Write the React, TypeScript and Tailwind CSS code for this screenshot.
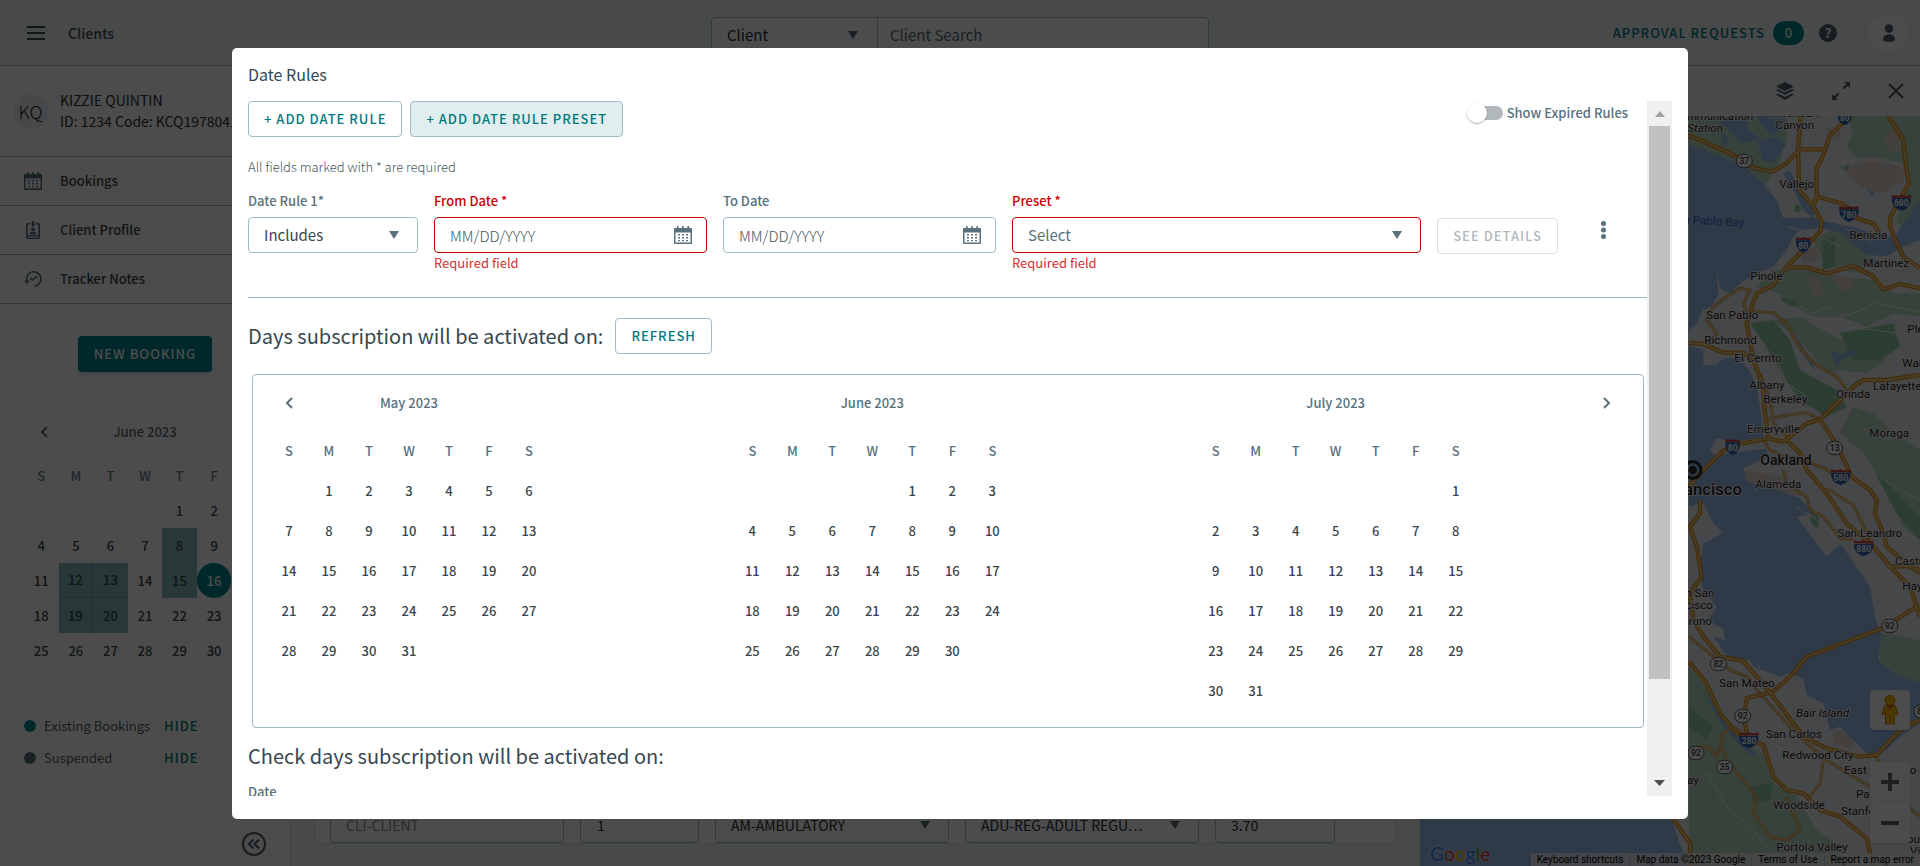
import type { ReactNode } from "react";

const WEEKDAYS = ["S", "M", "T", "W", "T", "F", "S"];

function buildWeeks(offset: number, days: number): (number | null)[][] {
  const cells: (number | null)[] = [
    ...Array.from({ length: offset }, () => null),
    ...Array.from({ length: days }, (_, i) => i + 1),
  ];
  const weeks: (number | null)[][] = [];
  for (let i = 0; i < cells.length; i += 7) weeks.push(cells.slice(i, i + 7));
  return weeks;
}

/* ---------- icons ---------- */

function CalendarIcon() {
  return (
    <svg width="18" height="18" viewBox="0 0 18 18" fill="currentColor" aria-hidden="true">
      <path d="M0 3a1 1 0 0 1 1-1h2V0h1.500v2h3.700V0h1.600v2h3.700V0H15v2h2a1 1 0 0 1 1 1v3H0z" />
      <path fillRule="evenodd" d="M0 5h18v12a1 1 0 0 1-1 1H1a1 1 0 0 1-1-1zm1.500 1.500v10h15v-10z" />
      <path d="M4 8h2v1.500H4zm4 0h2v1.500H8zm4 0h2v1.500h-2zM4 11h2v1.500H4zm4 0h2v1.500H8zm4 0h2v1.500h-2zM4 14h2v1.300H4zm4 0h2v1.300H8zm4 0h2v1.300h-2z" />
    </svg>
  );
}

function ProfileIcon() {
  return (
    <svg width="18" height="18" viewBox="0 0 18 18" fill="currentColor" aria-hidden="true">
      <path fillRule="evenodd" d="M2 3.500A1.500 1.500 0 0 1 3.500 2H6v1.500H3.700V14h10.600V3.500H12V2h2.500A1.500 1.500 0 0 1 16 3.500v13a1.500 1.500 0 0 1-1.500 1.500h-11A1.500 1.500 0 0 1 2 16.500zM3.700 15.500v1h10.600v-1z" />
      <path d="M7.500 1.500a1.500 1.500 0 0 1 3 0V4a1.500 1.500 0 0 1-3 0z" />
      <circle cx="9" cy="8.300" r="1.900" />
      <path d="M5.700 13.200c0-1.800 1.400-2.500 3.300-2.500s3.300.7 3.300 2.500z" />
    </svg>
  );
}

function TrackerIcon() {
  return (
    <svg width="18" height="18" viewBox="0 0 18 18" fill="none" stroke="currentColor" strokeWidth="1.600" aria-hidden="true">
      <path d="M2.600 11.500V9.500A7.200 7.200 0 1 1 10 16.200" />
      <path d="M6 7.800l2.400 2.200 5-4" />
      <path d="M0 10.800l5.600-.6-2.400 4z" fill="currentColor" stroke="none" />
    </svg>
  );
}

function Caret() {
  return (
    <svg width="10" height="8" viewBox="0 0 10 8" className="pointer-events-none shrink-0 text-[#58717d]" fill="currentColor" aria-hidden="true">
      <path d="M0 0h10L5 8z" />
    </svg>
  );
}

function Chevron({ right = false }: { right?: boolean }) {
  return (
    <svg width="8" height="12" viewBox="0 0 8 12" fill="none" stroke="currentColor" strokeWidth="2" aria-hidden="true">
      <path d={right ? "M1 1l5 5-5 5" : "M7 1L2 6l5 5"} />
    </svg>
  );
}

/* ---------- page behind the dialog ---------- */

function TopBar() {
  return (
    <header className="flex h-[66px] shrink-0 items-center border-t border-b border-t-[#ffffff] border-b-[#9fbcc6] bg-[#f0f3f6]">
      <div className="flex flex-1 items-center">
        <button type="button" aria-label="Open menu" className="ml-[27px] text-[#3d4f59]">
          <svg width="18" height="14" viewBox="0 0 18 14" fill="currentColor" aria-hidden="true">
            <path d="M0 0h18v2H0zM0 6h18v2H0zM0 12h18v2H0z" />
          </svg>
        </button>
        <span className="pl-[23px] text-[14px] leading-5 font-medium text-[#3d4f59]">Clients</span>
      </div>
      <form className="mt-1 flex h-9 w-[498px] rounded border border-[#9fbcc6] bg-white text-[15px]">
        <div className="flex w-[166px] items-center border-r border-[#9fbcc6] pr-[19px]">
          <select aria-label="Search type" className="h-full flex-1 appearance-none bg-transparent pl-[15px] text-[#263238]">
            <option>Client</option>
          </select>
          <Caret />
        </div>
        <input aria-label="Client search" placeholder="Client Search" className="min-w-0 flex-1 bg-transparent px-3 placeholder:text-[#58717d]" />
      </form>
      <div className="flex flex-1 items-center justify-end">
        <a href="#approvals" className="text-[13px] leading-5 font-medium tracking-[1px] text-[#007a80]">APPROVAL REQUESTS</a>
        <span className="ml-2 flex h-6 w-[31px] items-center justify-center rounded-full bg-[#00858c] text-[13px] font-medium text-white">0</span>
        <button type="button" aria-label="Help" className="ml-[15px] flex h-[18px] w-[18px] items-center justify-center rounded-full bg-[#4b5f69] text-[13px] font-bold text-white">?</button>
        <button type="button" aria-label="Account" className="mr-3 ml-8 flex h-[39px] w-[39px] items-center justify-center rounded-full bg-white text-[#4b5f69]">
          <svg width="14" height="18" viewBox="0 0 14 18" fill="currentColor" aria-hidden="true">
            <circle cx="7" cy="4.500" r="4.200" />
            <path d="M1 15.500C1 12 3.500 10.500 7 10.500s6 1.500 6 5c0 1.700-2.500 2.500-6 2.500s-6-.8-6-2.500z" />
          </svg>
        </button>
      </div>
    </header>
  );
}

function NavItem({ icon, label }: { icon: ReactNode; label: string }) {
  return (
    <a href="#nav" className="flex h-[49px] items-center border-b border-[#9fbcc6] pl-6 text-[13px] font-medium text-[#37474f]">
      <span className="w-9 text-[#58717d]">{icon}</span>
      {label}
    </a>
  );
}

const BOOKED = [8, 12, 13, 15, 19, 20];

function bookedClass(day: number | null) {
  if (day === null || !BOOKED.includes(day)) return "";
  const right = day === 12 || day === 19 ? " border-r border-r-[#5fa3a8]" : "";
  const bottom = day === 12 || day === 13 ? " border-b border-b-[#5fa3a8]" : "";
  return "bg-[#86b9bd]" + right + bottom;
}

function LegendRow({ dot, label }: { dot: string; label: string }) {
  return (
    <div className="flex h-8 items-center">
      <span className={"h-3 w-3 rounded-full " + dot} />
      <span className="w-[128px] pl-2 text-[13px] text-[#4b5f69]">{label}</span>
      <button type="button" className="text-[13px] font-medium tracking-[1px] text-[#007a80]">HIDE</button>
    </div>
  );
}

function Sidebar() {
  return (
    <aside className="flex w-[291px] shrink-0 flex-col border-r border-[#d5dde2] bg-white">
      <div className="flex h-[91px] items-center border-b border-[#9fbcc6] pl-[13px]">
        <span className="flex h-[35px] w-[35px] items-center justify-center rounded-full bg-[#ecf0f4] text-[18px] font-light text-[#101a1e]">KQ</span>
        <div className="pl-3 text-[14px] leading-[21px] whitespace-nowrap text-[#263238]">
          <p>KIZZIE QUINTIN</p>
          <p>ID: 1234 Code: KCQ19780415</p>
        </div>
      </div>
      <nav>
        <NavItem icon={<CalendarIcon />} label="Bookings" />
        <NavItem icon={<ProfileIcon />} label="Client Profile" />
        <NavItem icon={<TrackerIcon />} label="Tracker Notes" />
      </nav>
      <button type="button" className="mt-8 h-9 self-center rounded bg-[#00858c] px-4 text-[13px] font-medium tracking-[1px] text-white shadow-md">NEW BOOKING</button>
      <div className="mt-10 flex h-10 items-center px-6 text-[#58717d]">
        <button type="button" aria-label="Previous month" className="w-9 pl-4"><Chevron /></button>
        <h2 className="flex-1 text-center text-[13px] font-medium">June 2023</h2>
        <span className="w-9" />
      </div>
      <div className="mt-[6px] px-6">
        <table className="w-full table-fixed border-separate border-spacing-0 text-center text-[13px] font-medium text-[#37474f]">
          <thead>
            <tr>
              {WEEKDAYS.map((d, i) => (
                <th key={i} className="h-[35px] p-0 font-medium text-[#6b808a]">{d}</th>
              ))}
            </tr>
          </thead>
          <tbody>
            {buildWeeks(4, 30).map((week, w) => (
              <tr key={w}>
                {week.map((day, i) => (
                  <td key={i} className={"h-[35px] p-0 " + bookedClass(day)}>
                    {day === 16 ? (
                      <span className="flex h-[35px] w-full items-center justify-center rounded-full bg-[#00858c] text-white">16</span>
                    ) : (
                      day
                    )}
                  </td>
                ))}
              </tr>
            ))}
          </tbody>
        </table>
      </div>
      <div className="mt-[42px] pl-6">
        <LegendRow dot="bg-[#00858c]" label="Existing Bookings" />
        <LegendRow dot="bg-[#58717d]" label="Suspended" />
      </div>
      <button type="button" aria-label="Collapse sidebar" className="mt-auto mr-6 mb-[10px] self-end text-[#4b5f69]">
        <svg width="24" height="24" viewBox="0 0 24 24" fill="none" stroke="currentColor" strokeWidth="2" aria-hidden="true">
          <circle cx="12" cy="12" r="11" />
          <path d="M11.500 7.500L7 12l4.500 4.500M17 7.500L12.500 12l4.500 4.500" />
        </svg>
      </button>
    </aside>
  );
}

function TripForm() {
  const box = "flex h-9 items-center rounded border border-[#9fbcc6] bg-white";
  return (
    <main className="flex min-w-0 flex-1 flex-col justify-end bg-[#f0f3f6] pr-6 pb-[22px] pl-[23px]">
      <section className="flex gap-4 rounded border border-[#dbe3e8] bg-white pl-[15px] text-[14px] text-[#263238]">
        <input aria-label="Client" disabled placeholder="CLI-CLIENT" className={box + " w-[234px] px-[15px] placeholder:text-[#8b979d]"} />
        <input aria-label="Count" defaultValue="1" className={box + " w-[119px] px-4"} />
        <div className={box + " w-[234px] pr-[18px]"}>
          <select aria-label="Space type" className="h-full min-w-0 flex-1 appearance-none bg-transparent pl-[15px]">
            <option>AM-AMBULATORY</option>
          </select>
          <Caret />
        </div>
        <div className={box + " w-[234px] pr-[18px]"}>
          <select aria-label="Fare type" className="h-full min-w-0 flex-1 appearance-none bg-transparent pl-[15px]">
            <option>ADU-REG-ADULT REGU…</option>
          </select>
          <Caret />
        </div>
        <input aria-label="Fare" defaultValue="3.70" className={box + " w-[120px] px-[15px]"} />
      </section>
    </main>
  );
}

/* ---------- map ---------- */

const HIGHWAYS = [
  "M100 275L160 292L200 308L280 345L340 383L395 396L440 370L478 328L550 328",
  "M630 228L570 285L550 345L530 385L530 470L520 500L545 545L542 572L490 630L440 680L400 735L350 760L335 800L320 850L340 960L370 1040L375 1120L385 1195L300 1212L250 1232L180 1300L147 1340",
  "M482 228L474 330L478 450L520 500",
  "M525 468L610 492L650 535L700 550L720 580",
  "M745 228L790 300L796 360L806 430L750 535L750 560L770 610L790 650L840 685",
  "M440 682L500 682L560 700L640 678L700 710L730 748L780 732L840 745",
  "M147 908L190 912L250 938L310 938L340 960",
  "M385 1195L430 1205L500 1150L540 1138L590 1090L640 1040L670 1020L740 1020L840 1005",
  "M540 1138L590 1215L635 1310L690 1350L710 1380L705 1420L730 1480L740 1520L800 1570L840 1600",
  "M440 1200L480 1240L500 1290L560 1360L620 1450L700 1520L760 1590L810 1640L840 1730",
  "M740 1580L800 1578L840 1590",
  "M830 1700L730 1764L500 1850L460 1900L400 1955L320 1975L312 2030L320 2080",
  "M180 1380L180 1420L150 1460L170 1520L185 1610L150 1660L160 1740L190 1790L240 1850L310 1863L400 1970L490 2090L560 2125L660 2150L710 2145L780 2070L840 2040",
  "M147 1865L200 1930L240 2020L290 2080L370 2115L385 2160L400 2210L440 2250L490 2260L540 2310L600 2330L680 2395L700 2478",
  "M100 2338L150 2410L150 2478",
];

const LOCAL_ROADS = [
  "M330 840L310 790L330 750L300 745L260 770L220 800L200 840L230 880L215 900",
  "M330 812L400 818L440 850L470 910L520 970L590 1010L620 1050",
  "M147 2130L200 2120L230 2150L250 2080L280 2060L310 2080",
  "M240 2120L290 2200L350 2270L340 2320L390 2390L440 2400L480 2370L460 2320L440 2270",
  "M550 2165L540 2230L505 2275",
  "M380 1140L440 1125L500 1118L540 1138",
  "M430 1290L440 1330L500 1370L510 1410L550 1430L600 1495L640 1500",
  "M370 1200L390 1230L430 1250L480 1255L540 1280L600 1310",
  "M560 1345L640 1395L690 1500",
  "M147 1790L220 1850L270 1890L320 1910L360 1960L440 2050L500 2110L560 2160L640 2210L690 2240",
  "M690 2240L720 2170L700 2140",
  "M780 2280L840 2330",
  "M360 1000L390 1080L400 1150L450 1200",
];

const STREETS = [
  "M540 350L580 335L610 350L615 390L600 430L540 460M560 345V440M580 340V440M540 370L612 370M540 400L610 395M540 420L600 425",
  "M600 440L610 470L640 490M600 430L590 480",
  "M440 560L480 570L560 600L600 620M580 540L640 580L700 610",
  "M410 960L440 1030L500 1070M400 1000L460 1080L500 1110M390 1080L480 1100",
  "M480 800L520 820L560 800L610 830L690 800L700 785L760 800L840 815M600 820L620 860L700 870L780 880",
  "M640 1080L700 1060L760 1100L840 1110M660 1160L740 1200L800 1180M700 1040L720 1090L840 1150",
  "M470 1400L560 1460L600 1520M640 1500L690 1560L720 1640L840 1660M720 1690L840 1700",
  "M600 1280L680 1300L740 1360M660 1220L690 1290L780 1350L840 1380",
  "M350 1870L420 1990L520 2090M260 1880L360 2000L430 2100M380 2100L480 2160L540 2230",
  "M560 2200L640 2280L720 2300M480 2290L560 2380L640 2420M620 2180L690 2290",
  "M147 2240L200 2200L260 2300L330 2360L400 2440",
];

const PLACES: [string, number, number][] = [
  ["Canyon", 406, 267],
  ["Vallejo", 418, 444],
  ["Benicia", 628, 597],
  ["Martinez", 670, 681],
  ["Pinole", 331, 720],
  ["San Pablo", 198, 837],
  ["Richmond", 193, 912],
  ["El Cerrito", 283, 966],
  ["Albany", 328, 1047],
  ["Berkeley", 370, 1089],
  ["Orinda", 588, 1073],
  ["Lafayette", 699, 1050],
  ["Moraga", 688, 1191],
  ["Emeryville", 321, 1179],
  ["Pleasant Hill", 802, 879],
  ["Walnut Creek", 787, 980],
  ["Alameda", 346, 1344],
  ["San Leandro", 592, 1491],
  ["Castro Valley", 765, 1575],
  ["Hayward", 787, 1650],
  ["San Mateo", 237, 1941],
  ["San Carlos", 378, 2094],
  ["Redwood City", 427, 2157],
  ["East Palo Alto", 612, 2202],
  ["Palo Alto", 648, 2275],
  ["Stanford", 603, 2325],
  ["Woodside", 400, 2307],
  ["Portola Valley", 409, 2433],
  ["Mountain", 770, 2410],
  ["View", 810, 2445],
];

const INTERSTATES: [string, number, number][] = [
  ["80", 614, 232],
  ["680", 784, 488],
  ["780", 627, 522],
  ["80", 490, 615],
  ["80", 278, 1221],
  ["580", 602, 1312],
  ["880", 671, 1525],
  ["280", 327, 2101],
];

const ROUTES: [string, number, number][] = [
  ["37", 313, 363],
  ["13", 584, 1224],
  ["92", 749, 1758],
  ["82", 235, 1872],
  ["92", 308, 2028],
  ["92", 168, 2139],
  ["35", 254, 2181],
  ["84", 846, 2014],
];

function RegionMap() {
  return (
    <svg className="h-full w-full" viewBox="-660 228 1500 2250" preserveAspectRatio="xMaxYMin slice" role="img" aria-label="Map of the San Francisco Bay Area" fontFamily="Roboto, sans-serif">
      <rect x="-660" y="228" width="1500" height="2250" fill="#eceef2" />
      <g fill="#b4dcc3">
        <path d="M147 228H440L440 300L420 360L380 430L300 390L147 330z" />
        <path d="M620 228H840V560L800 590L770 540L800 440L790 370L700 350L650 355L620 320L640 280z" />
        <path d="M350 740L400 690L520 690L600 710L700 720L760 760L840 760V830L760 820L680 860L600 830L520 830L450 790L420 760z" />
        <path d="M520 600L600 560L650 620L700 660L660 700L600 690L550 660zM230 690L260 700L290 710L250 760z" />
        <path d="M640 1100L700 1120L760 1180L840 1230V1500L790 1460L740 1340L660 1230L600 1180z" />
        <path d="M147 1880L230 1980L260 2060L330 2120L370 2140L400 2230L470 2270L530 2370L600 2420L620 2478H160L147 2420z" />
        <path d="M720 1780L840 1800V1950L770 1910L720 1880z" />
        <path d="M400 840L480 830L600 900L660 900L740 960L680 1000L600 990L560 1000L480 900z" />
      </g>
      <g fill="#93cda5">
        <path d="M330 850L400 840L450 900L480 990L590 1050L620 1100L560 1130L480 1080L430 1010L380 920z" />
        <path d="M600 880L760 850L780 920L720 960L640 960z" />
        <path d="M700 1290L760 1350L840 1430V1500L770 1420z" />
        <path d="M330 2240L400 2230L390 2280L340 2290zM147 2000L220 2060L200 2100L147 2060z" />
        <path d="M515 1400L540 1440L530 1470L510 1440zM700 2085L745 2080L740 2130L700 2120z" />
        <path d="M548 600L585 590V680L548 690zM420 770L475 785L460 800L430 785zM600 380L630 372L620 400z" />
      </g>
      <g fill="#e2d8cf">
        <path d="M620 390L640 372L700 362L780 378L795 400L790 430L760 435L740 460L680 450L640 425z" />
        <path d="M735 280L760 268L785 300L780 340L745 330L732 310zM560 265L605 275L590 300L565 290z" />
        <path d="M500 720L530 710L550 740L545 770L525 765zM570 715L620 705L645 735L620 755L600 745zM480 640L530 620L540 660L490 670z" />
        <path d="M310 1290L420 1310L500 1370L420 1360L320 1330zM580 2070L640 2080L640 2130L580 2110z" />
      </g>
      <g fill="#9fc1f4">
        <path d="M147 315L230 345L310 378L370 430L410 480L430 535L520 532L560 545L640 560L700 582L760 592L800 540L840 480V600L785 622L740 648L680 646L650 620L600 577L540 565L480 570L460 590L440 630L400 680L350 702L310 722L270 760L240 745L230 690L235 760L215 800L190 808L170 850L147 872z" />
        <path d="M200 228H330L320 262L360 300L410 290L440 310L400 370L370 360L350 300L300 310L260 262z" />
        <path d="M350 228H420L440 250L400 290L370 262z" />
        <path d="M240 270L270 300L250 320z" />
        <path d="M430 400L450 390L480 450L530 500L520 535L490 510L460 450z" />
        <path d="M680 448L695 456L705 448L698 468L690 464z" />
        <path d="M147 915L190 930L190 975L225 975L250 955L300 955L330 995L350 1040L360 1100L372 1190L290 1205L230 1195L210 1230L230 1250L260 1240L380 1225L385 1250L310 1285L320 1325L400 1345L480 1375L520 1420L470 1430L560 1550L600 1510L650 1580L690 1640L705 1730L725 1790L715 1860L760 1900L840 1930V2050L780 2090L740 2130L690 2150L640 2100L600 2060L570 2070L550 1990L500 1965L490 1915L450 1900L420 1910L340 1880L330 1860L260 1848L220 1790L255 1800L250 1770L205 1740L230 1700L190 1650L175 1600L190 1510L250 1480L220 1450L190 1390L147 1400z" />
        <path d="M-660 2200L60 2280L100 2345L115 2400L145 2478H-660z" />
        <path d="M465 880L500 940L530 970L520 985L480 930zM570 930L600 945L640 925L650 945L610 955L590 980z" />
        <path d="M180 1940L230 2010L300 2080L350 2150L320 2140L250 2060z" />
      </g>
      <path d="M468 490L485 505L478 516L462 512z" fill="#93cda5" />
      <g fill="none" stroke="#fbfbfd" strokeWidth="3">
        {STREETS.map((d) => (
          <path key={d} d={d} />
        ))}
      </g>
      <g fill="none" strokeLinejoin="round">
        <g stroke="#e0a04a" strokeWidth="9">
          {LOCAL_ROADS.map((d) => (
            <path key={d} d={d} />
          ))}
        </g>
        <g stroke="#f0d49c" strokeWidth="4">
          {LOCAL_ROADS.map((d) => (
            <path key={d} d={d} />
          ))}
        </g>
        <g stroke="#e8920c" strokeWidth="13">
          {HIGHWAYS.map((d) => (
            <path key={d} d={d} />
          ))}
        </g>
        <g stroke="#efc988" strokeWidth="6">
          {HIGHWAYS.map((d) => (
            <path key={d} d={d} />
          ))}
        </g>
      </g>
      {ROUTES.map(([n, x, y]) => (
        <g key={n + x}>
          <rect x={x - 24} y={y - 20} width="48" height="40" rx="20" fill="#ffffff" stroke="#54595e" strokeWidth="3" />
          <text x={x} y={y + 9} fontSize="26" fontWeight="500" textAnchor="middle" fill="#3c4043">{n}</text>
        </g>
      ))}
      {INTERSTATES.map(([n, x, y]) => {
        const w = n.length > 2 ? 29 : 22;
        return (
          <g key={n + x}>
            <path d={`M${x - w} ${y - 14}H${x + w}Q${x + w + 2} ${y + 14} ${x} ${y + 24}Q${x - w - 2} ${y + 14} ${x - w} ${y - 14}z`} fill="#3468b4" />
            <path d={`M${x - w} ${y - 24}q${w / 2} 6 ${w} 0q${w / 2} 6 ${w} 0v9H${x - w}z`} fill="#d8434b" />
            <text x={x} y={y + 11} fontSize="26" fontWeight="700" textAnchor="middle" fill="#ffffff">{n}</text>
          </g>
        );
      })}
      <g fill="#1f2226" stroke="#ffffff" strokeWidth="5" paintOrder="stroke" strokeLinejoin="round" fontSize="35">
        {PLACES.map(([name, x, y]) => (
          <text key={name} x={x} y={y}>{name}</text>
        ))}
        <text x="386" y="232">American</text>
        <text x="100" y="240" fontStyle="italic">Communication</text>
        <text x="142" y="276" fontStyle="italic">Station</text>
        <text x="468" y="2031" fontStyle="italic">Bair Island</text>
        <text x="223" y="1671" textAnchor="end">South San</text>
        <text x="219" y="1707" textAnchor="end">Francisco</text>
        <text x="216" y="1755" textAnchor="end">San Bruno</text>
        <text x="176" y="2232" textAnchor="end">Half Moon Bay</text>
        <text x="361" y="1275" fontSize="42" fontWeight="500">Oakland</text>
        <text x="306" y="1364" fontSize="50" fontWeight="500" textAnchor="end">San Francisco</text>
      </g>
      <text x="90" y="548" fontSize="35" fill="#3769c8" transform="rotate(3 82 551)">San Pablo Bay</text>
      <circle cx="158" cy="1290" r="25" fill="none" stroke="#2b2f33" strokeWidth="10" />
      <circle cx="158" cy="1290" r="13" fill="#2b2f33" />
    </svg>
  );
}

function MapPanel() {
  return (
    <section className="flex w-[500px] shrink-0 flex-col bg-white">
      <div className="flex h-[50px] shrink-0 items-center justify-end gap-[38px] bg-[#f8f9fa] pr-4 text-[#4b5f69]">
        <button type="button" aria-label="Layers">
          <svg width="18" height="18" viewBox="0 0 18 18" fill="currentColor" aria-hidden="true">
            <path d="M9 0l9 4.500L9 9 0 4.500z" />
            <path d="M0 8l2-1 7 3.500L16 7l2 1-9 4.800zM0 12.500l2-1L9 15l7-3.500 2 1L9 18z" />
          </svg>
        </button>
        <button type="button" aria-label="Expand map">
          <svg width="18" height="18" viewBox="0 0 18 18" fill="currentColor" aria-hidden="true">
            <path d="M12 0h6v6l-2.200-2.200-3.600 3.600-1.600-1.600 3.600-3.600zM6 18H0v-6l2.200 2.200 3.600-3.600 1.600 1.600-3.600 3.600z" />
          </svg>
        </button>
        <button type="button" aria-label="Close map">
          <svg width="16" height="16" viewBox="0 0 16 16" fill="none" stroke="currentColor" strokeWidth="2.200" aria-hidden="true">
            <path d="M1 1l14 14M15 1L1 15" />
          </svg>
        </button>
      </div>
      <div className="relative min-h-0 flex-1 overflow-hidden font-[Roboto,sans-serif]">
        <RegionMap />
        <span className="absolute bottom-0 left-[10px] flex font-[Lato,sans-serif] text-[19px] leading-6 font-medium text-shadow-[0_0_2px_#ffffff]">
          <span className="text-[#4285f4]">G</span>
          <span className="text-[#ea4335]">o</span>
          <span className="text-[#fbbc05]">o</span>
          <span className="text-[#4285f4]">g</span>
          <span className="text-[#34a853]">l</span>
          <span className="text-[#ea4335]">e</span>
        </span>
        <div className="absolute right-[10px] bottom-[23px] flex w-10 flex-col gap-8">
          <button type="button" aria-label="Street View" className="flex h-10 items-center justify-center rounded-sm bg-white shadow">
            <svg width="18" height="30" viewBox="0 0 18 30" aria-hidden="true">
              <path d="M4 10h10l3 9-2 1-1.500-3V29h-9V17L3 20l-2-1z" fill="#fbbc04" stroke="#c98a10" />
              <circle cx="9" cy="5.500" r="5" fill="#fbbc04" stroke="#c98a10" />
              <path d="M5 10h8l-4 5z" fill="#e06a1c" />
              <path d="M9 20v9" stroke="#c98a10" />
            </svg>
          </button>
          <div className="rounded-sm bg-white px-[5px] text-[#666666] shadow">
            <button type="button" aria-label="Zoom in" className="flex h-10 w-full items-center justify-center border-b border-[#e6e6e6]">
              <svg width="18" height="18" viewBox="0 0 18 18" fill="currentColor" aria-hidden="true"><path d="M7 0h4v7h7v4h-7v7H7v-7H0V7h7z" /></svg>
            </button>
            <button type="button" aria-label="Zoom out" className="flex h-[41px] w-full items-center justify-center">
              <svg width="18" height="4" viewBox="0 0 18 4" fill="currentColor" aria-hidden="true"><path d="M0 0h18v4H0z" /></svg>
            </button>
          </div>
        </div>
        <div className="absolute right-0 bottom-0 flex h-[13px] items-center divide-x divide-[#c9ccd0] bg-[#f5f5f5]/80 text-[10px] whitespace-nowrap text-black">
          <button type="button" className="px-[6px]">Keyboard shortcuts</button>
          <span className="px-[6px]">Map data ©2023 Google</span>
          <a href="#terms" className="px-[6px]">Terms of Use</a>
          <a href="#report" className="px-[6px]">Report a map error</a>
        </div>
      </div>
    </section>
  );
}

/* ---------- dialog ---------- */

const outlineButton =
  "h-9 rounded border border-[#9fbcc6] px-[15px] text-[13px] font-medium tracking-[1px] whitespace-nowrap text-[#007a80]";

function DateField({ id, label, error }: { id: string; label: string; error?: string }) {
  return (
    <div className="w-[273px] shrink-0">
      <label htmlFor={id} className={"block text-[13px] leading-5 font-medium " + (error ? "text-[#cc0000]" : "text-[#58717d]")}>{label}</label>
      <div className={"mt-[6px] flex h-9 items-center rounded border pr-[14px] text-[#58717d] " + (error ? "border-[#cc0000]" : "border-[#9fbcc6]")}>
        <input id={id} placeholder="MM/DD/YYYY" className="h-full min-w-0 flex-1 bg-transparent pl-[15px] text-[15px] font-light outline-none placeholder:text-[#3f5661]" />
        <button type="button" aria-label={"Pick " + label}><CalendarIcon /></button>
      </div>
      {error && <p className="text-[13px] leading-5 text-[#d32f2f]">{error}</p>}
    </div>
  );
}

function Month({ title, offset, days, prev, next }: { title: string; offset: number; days: number; prev?: boolean; next?: boolean }) {
  return (
    <div className="px-4">
      <div className="flex h-10 items-center">
        <div className="grid w-[280px] grid-cols-[40px_1fr_40px] items-center text-[#58717d]">
          {prev ? <button type="button" aria-label="Previous month" className="flex justify-center"><Chevron /></button> : <span />}
          <h3 className="text-center text-[13px] font-medium">{title}</h3>
        </div>
        {next && <button type="button" aria-label="Next month" className="mr-4 ml-auto text-[#58717d]"><Chevron right /></button>}
      </div>
      <table className="mt-2 w-[280px] table-fixed text-center text-[13px] font-medium text-[#37474f]">
        <thead>
          <tr>
            {WEEKDAYS.map((d, i) => (
              <th key={i} className="h-10 p-0 font-medium text-[#58717d]">{d}</th>
            ))}
          </tr>
        </thead>
        <tbody>
          {buildWeeks(offset, days).map((week, w) => (
            <tr key={w}>
              {week.map((day, i) => (
                <td key={i} className="h-10 p-0">{day}</td>
              ))}
            </tr>
          ))}
        </tbody>
      </table>
    </div>
  );
}

function Scrollbar() {
  return (
    <div className="flex w-[25px] shrink-0 flex-col bg-[#f0f0f0]" aria-hidden="true">
      <div className="flex h-[25px] items-center justify-center text-[#a3a3a3]">
        <svg width="10" height="6" viewBox="0 0 10 6" fill="currentColor"><path d="M5 0l5 6H0z" /></svg>
      </div>
      <div className="flex-1 px-[2px]">
        <div className="h-[86%] bg-[#c1c1c1]" />
      </div>
      <div className="flex h-[27px] items-center justify-center text-[#505050]">
        <svg width="11" height="6" viewBox="0 0 11 6" fill="currentColor"><path d="M0 0h11L5.500 6z" /></svg>
      </div>
    </div>
  );
}

function DateRulesDialog() {
  return (
    <div role="dialog" aria-labelledby="dialog-title" className="flex min-w-0 flex-1 flex-col rounded-[5px] bg-white pt-[14px] pr-4 pb-[23px] pl-4 text-[#37474f]">
      <h1 id="dialog-title" className="mb-[15px] text-[16px] leading-6">Date Rules</h1>
      <div className="flex min-h-0 flex-1">
        <div className="min-w-0 flex-1 overflow-hidden">
          <div className="flex items-start gap-2">
            <button type="button" className={outlineButton}>+ ADD DATE RULE</button>
            <button type="button" className={outlineButton + " bg-[#e0eeef]"}>+ ADD DATE RULE PRESET</button>
            <label className="mt-[2px] mr-[19px] ml-auto flex items-center gap-1 text-[13px] leading-5 font-medium text-[#58717d]">
              <input
                type="checkbox"
                role="switch"
                className="relative h-5 w-9 appearance-none before:absolute before:top-[3px] before:right-0 before:h-[14px] before:w-[30px] before:rounded-full before:bg-[#b0b8bc] after:absolute after:top-0 after:left-0 after:h-5 after:w-5 after:rounded-full after:bg-white after:shadow-[0_1px_2px_rgba(0,0,0,0.3)]"
              />
              Show Expired Rules
            </label>
          </div>
          <p className="mt-5 text-[13px] leading-5 font-light text-[#3f5661]">All fields marked with * are required</p>

          <div className="mt-[14px] flex items-start gap-4 border-b border-[#9fbcc6] pb-6">
            <div className="w-[170px] shrink-0">
              <label htmlFor="rule" className="block text-[13px] leading-5 font-medium text-[#58717d]">Date Rule 1*</label>
              <div className="mt-[6px] flex h-9 items-center rounded border border-[#9fbcc6] pr-[18px] text-[15px]">
                <select id="rule" className="h-full min-w-0 flex-1 appearance-none bg-transparent pl-[15px]">
                  <option>Includes</option>
                </select>
                <Caret />
              </div>
            </div>
            <DateField id="from" label="From Date *" error="Required field" />
            <DateField id="to" label="To Date" />
            <div className="min-w-0 flex-1">
              <label htmlFor="preset" className="block text-[13px] leading-5 font-medium text-[#cc0000]">Preset *</label>
              <div className="mt-[6px] flex h-9 items-center rounded border border-[#cc0000] pr-[18px] text-[15px] text-[#58717d]">
                <select id="preset" className="h-full min-w-0 flex-1 appearance-none bg-transparent pl-[15px]">
                  <option>Select</option>
                </select>
                <Caret />
              </div>
              <p className="text-[13px] leading-5 text-[#d32f2f]">Required field</p>
            </div>
            <button type="button" disabled className="mt-[27px] h-9 w-[121px] shrink-0 rounded border border-[#dcdfe1] text-[13px] font-medium tracking-[1px] whitespace-nowrap text-[#b0b9be]">SEE DETAILS</button>
            <button type="button" aria-label="More actions" className="mt-[30px] mr-[41px] ml-[27px] text-[#58717d]">
              <svg width="5" height="18" viewBox="0 0 5 18" fill="currentColor" aria-hidden="true">
                <circle cx="2.500" cy="2.500" r="2.500" />
                <circle cx="2.500" cy="9" r="2.500" />
                <circle cx="2.500" cy="15.500" r="2.500" />
              </svg>
            </button>
          </div>

          <div className="mt-5 flex items-center gap-3">
            <h2 className="text-[20px] leading-8">Days subscription will be activated on:</h2>
            <button type="button" className={outlineButton}>REFRESH</button>
          </div>

          <div className="mt-5 mr-[3px] ml-1 grid grid-cols-3 rounded border border-[#9fbcc6] pt-2 pb-4">
            <Month title="May 2023" offset={1} days={31} prev />
            <Month title="June 2023" offset={4} days={30} />
            <Month title="July 2023" offset={6} days={31} next />
          </div>

          <h2 className="mt-3 text-[20px] leading-8">Check days subscription will be activated on:</h2>
          <label htmlFor="check-date" className="mt-[10px] block text-[13px] leading-5 font-medium text-[#58717d]">Date</label>
          <input id="check-date" className="mt-[6px] h-9 w-[273px] rounded border border-[#9fbcc6]" />
        </div>
        <Scrollbar />
      </div>
    </div>
  );
}

export default function App() {
  return (
    <div className="flex h-screen flex-col overflow-hidden font-['Noto_Sans_CJK_SC','Noto_Sans',sans-serif]">
      <TopBar />
      <div className="flex min-h-0 flex-1">
        <Sidebar />
        <TripForm />
        <MapPanel />
      </div>
      <div className="fixed inset-0 flex bg-black/70 px-[232px] pt-12 pb-[47px]">
        <DateRulesDialog />
      </div>
    </div>
  );
}
